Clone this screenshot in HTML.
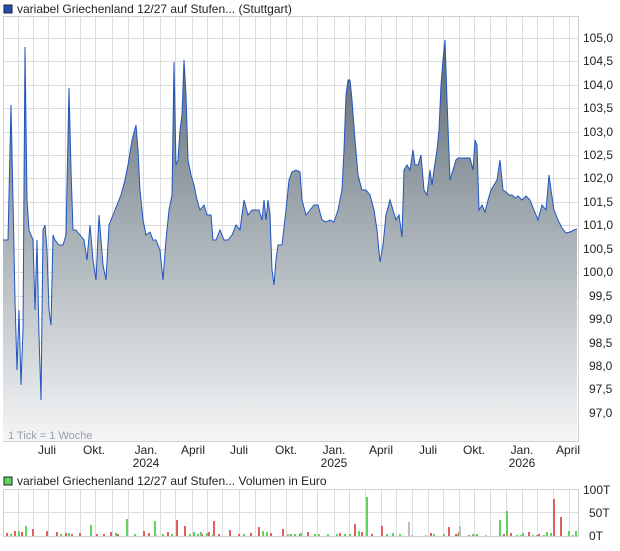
<!DOCTYPE html>
<html><head><meta charset="utf-8"><style>
body{margin:0;background:#fff;width:620px;height:546px;overflow:hidden;font-family:"Liberation Sans",sans-serif;}
svg text{font-family:"Liberation Sans",sans-serif;font-size:12px;fill:#222;}
</style></head><body>
<svg width="620" height="546" viewBox="0 0 620 546">
<defs>
<linearGradient id="g" x1="0" y1="38" x2="0" y2="441" gradientUnits="userSpaceOnUse">
<stop offset="0" stop-color="#5a666f"/><stop offset="0.45" stop-color="#a2abb1"/><stop offset="1" stop-color="#f4f5f6"/>
</linearGradient>
</defs>
<rect x="4" y="5" width="8" height="8" fill="#1f4fb5" stroke="#222" stroke-width="1"/>
<text x="17" y="13">variabel Griechenland 12/27 auf Stufen... (Stuttgart)</text>
<g stroke="#dcdcdc" stroke-width="1">
<path d="M3.5 38.5H578M3.5 61.5H578M3.5 85.5H578M3.5 108.5H578M3.5 132.5H578M3.5 155.5H578M3.5 178.5H578M3.5 202.5H578M3.5 225.5H578M3.5 249.5H578M3.5 272.5H578M3.5 296.5H578M3.5 319.5H578M3.5 343.5H578M3.5 366.5H578M3.5 389.5H578M3.5 413.5H578"/>
<path d="M18.5 17V441M33.5 17V441M48.5 17V441M65.5 17V441M80.5 17V441M95.5 17V441M112.5 17V441M128.5 17V441M143.5 17V441M160.5 17V441M175.5 17V441M192.5 17V441M207.5 17V441M222.5 17V441M239.5 17V441M255.5 17V441M270.5 17V441M286.5 17V441M302.5 17V441M317.5 17V441M334.5 17V441M349.5 17V441M365.5 17V441M381.5 17V441M396.5 17V441M412.5 17V441M428.5 17V441M443.5 17V441M459.5 17V441M474.5 17V441M490.5 17V441M506.5 17V441M522.5 17V441M537.5 17V441M553.5 17V441M569.5 17V441"/>
</g>
<rect x="3.5" y="16.5" width="575" height="425" fill="none" stroke="#d0d0d0"/>
<polygon fill="url(#g)" points="3,441 3,240 8,240 11,105 13,200 15,300 17,370 19,310 21,385 23,330 25,47 27,200 29,230 33,240 35,310 37,240 39,335 41,400 43,230 45,225 47,250 49,310 51,325 53,235 55,240 59,245 63,245 66,235 69,88 71,170 73,230 76,230 80,235 84,240 87,260 90,225 93,260 96,280 99,215 103,265 106,280 109,225 113,215 117,205 121,195 125,180 128,165 132,140 136,125 138,150 140,190 143,220 146,235 150,232 153,240 156,240 160,250 163,280 166,240 169,210 172,195 174,62 176,165 178,160 180,130 182,115 184,60 186,95 188,160 191,175 194,185 197,200 200,210 204,205 207,215 211,215 213,240 216,240 220,230 224,240 228,240 232,235 236,225 240,230 244,200 248,215 252,210 256,210 259,210 262,220 264,200 266,220 268,200 270,215 272,270 274,285 276,260 278,245 282,245 286,210 289,180 292,172 296,170 300,172 302,200 306,215 310,210 314,205 318,205 322,220 326,222 330,220 334,222 338,210 342,190 344,150 346,95 348,80 350,80 352,100 355,140 358,175 362,190 366,190 370,195 374,210 377,230 380,262 383,245 386,215 390,200 393,210 396,220 399,215 402,237 404,170 407,165 410,170 413,150 415,165 418,165 421,155 424,190 427,195 430,170 432,185 434,170 437,150 439,130 441,85 443,60 445,40 447,100 450,180 453,170 456,160 458,158 462,158 466,158 470,158 473,170 475,140 477,145 479,210 482,205 485,212 488,200 491,190 494,185 497,180 500,160 503,190 506,192 509,195 512,195 515,198 518,196 522,200 526,196 530,200 534,210 538,220 542,205 546,210 549,175 551,190 554,210 558,220 562,228 566,233 570,232 574,230 577,229 577,441"/>
<polyline fill="none" stroke="#1f55c0" stroke-width="1" points="3,240 8,240 11,105 13,200 15,300 17,370 19,310 21,385 23,330 25,47 27,200 29,230 33,240 35,310 37,240 39,335 41,400 43,230 45,225 47,250 49,310 51,325 53,235 55,240 59,245 63,245 66,235 69,88 71,170 73,230 76,230 80,235 84,240 87,260 90,225 93,260 96,280 99,215 103,265 106,280 109,225 113,215 117,205 121,195 125,180 128,165 132,140 136,125 138,150 140,190 143,220 146,235 150,232 153,240 156,240 160,250 163,280 166,240 169,210 172,195 174,62 176,165 178,160 180,130 182,115 184,60 186,95 188,160 191,175 194,185 197,200 200,210 204,205 207,215 211,215 213,240 216,240 220,230 224,240 228,240 232,235 236,225 240,230 244,200 248,215 252,210 256,210 259,210 262,220 264,200 266,220 268,200 270,215 272,270 274,285 276,260 278,245 282,245 286,210 289,180 292,172 296,170 300,172 302,200 306,215 310,210 314,205 318,205 322,220 326,222 330,220 334,222 338,210 342,190 344,150 346,95 348,80 350,80 352,100 355,140 358,175 362,190 366,190 370,195 374,210 377,230 380,262 383,245 386,215 390,200 393,210 396,220 399,215 402,237 404,170 407,165 410,170 413,150 415,165 418,165 421,155 424,190 427,195 430,170 432,185 434,170 437,150 439,130 441,85 443,60 445,40 447,100 450,180 453,170 456,160 458,158 462,158 466,158 470,158 473,170 475,140 477,145 479,210 482,205 485,212 488,200 491,190 494,185 497,180 500,160 503,190 506,192 509,195 512,195 515,198 518,196 522,200 526,196 530,200 534,210 538,220 542,205 546,210 549,175 551,190 554,210 558,220 562,228 566,233 570,232 574,230 577,229"/>
<text x="8" y="439" style="fill:#9aa0a6;font-size:11px">1 Tick = 1 Woche</text>
<g>
<text x="583" y="42">105,0</text><text x="583" y="65">104,5</text><text x="583" y="89">104,0</text><text x="583" y="112">103,5</text><text x="583" y="136">103,0</text><text x="583" y="159">102,5</text><text x="583" y="182">102,0</text><text x="583" y="206">101,5</text><text x="583" y="229">101,0</text><text x="583" y="253">100,5</text><text x="583" y="276">100,0</text><text x="589" y="300">99,5</text><text x="589" y="323">99,0</text><text x="589" y="347">98,5</text><text x="589" y="370">98,0</text><text x="589" y="393">97,5</text><text x="589" y="417">97,0</text>
</g>
<g text-anchor="middle">
<text x="47" y="454">Juli</text><text x="94" y="454">Okt.</text><text x="146" y="454">Jan.</text><text x="146" y="467">2024</text><text x="193" y="454">April</text><text x="239" y="454">Juli</text><text x="286" y="454">Okt.</text><text x="334" y="454">Jan.</text><text x="334" y="467">2025</text><text x="381" y="454">April</text><text x="428" y="454">Juli</text><text x="474" y="454">Okt.</text><text x="522" y="454">Jan.</text><text x="522" y="467">2026</text><text x="568" y="454">April</text>
</g>
<rect x="4" y="477" width="8" height="8" fill="#5fd35f" stroke="#222" stroke-width="1"/>
<text x="17" y="485">variabel Griechenland 12/27 auf Stufen... Volumen in Euro</text>
<g stroke="#dcdcdc" stroke-width="1">
<path d="M3.5 512.5H578"/>
<path d="M18.5 489V536M33.5 489V536M48.5 489V536M65.5 489V536M80.5 489V536M95.5 489V536M112.5 489V536M128.5 489V536M143.5 489V536M160.5 489V536M175.5 489V536M192.5 489V536M207.5 489V536M222.5 489V536M239.5 489V536M255.5 489V536M270.5 489V536M286.5 489V536M302.5 489V536M317.5 489V536M334.5 489V536M349.5 489V536M365.5 489V536M381.5 489V536M396.5 489V536M412.5 489V536M428.5 489V536M443.5 489V536M459.5 489V536M474.5 489V536M490.5 489V536M506.5 489V536M522.5 489V536M537.5 489V536M553.5 489V536M569.5 489V536"/>
</g>
<rect x="3.5" y="489.5" width="575" height="47" fill="none" stroke="#d0d0d0"/>
<g fill="#e06060">
<rect x="6" y="533" width="2" height="3"/><rect x="14" y="531" width="2" height="5"/><rect x="21" y="532" width="2" height="4"/><rect x="32" y="529" width="2" height="7"/><rect x="46" y="531" width="2" height="5"/><rect x="56" y="532" width="2" height="4"/><rect x="65" y="533" width="2" height="3"/><rect x="71" y="534" width="2" height="2"/><rect x="79" y="533" width="2" height="3"/><rect x="96" y="534" width="2" height="2"/><rect x="103" y="534" width="2" height="2"/><rect x="110" y="532" width="2" height="4"/><rect x="117" y="534" width="2" height="2"/><rect x="143" y="531" width="2" height="5"/><rect x="148" y="533" width="2" height="3"/><rect x="167" y="532" width="2" height="4"/><rect x="176" y="520" width="2" height="16"/><rect x="184" y="526" width="2" height="10"/><rect x="201" y="534" width="2" height="2"/><rect x="208" y="532" width="2" height="4"/><rect x="213" y="521" width="2" height="15"/><rect x="218" y="534" width="2" height="2"/><rect x="229" y="530" width="2" height="6"/><rect x="238" y="534" width="2" height="2"/><rect x="250" y="533" width="2" height="3"/><rect x="258" y="527" width="2" height="9"/><rect x="270" y="533" width="2" height="3"/><rect x="282" y="529" width="2" height="7"/><rect x="299" y="534" width="2" height="2"/><rect x="307" y="532" width="2" height="4"/><rect x="339" y="533" width="2" height="3"/><rect x="354" y="524" width="2" height="12"/><rect x="361" y="532" width="2" height="4"/><rect x="371" y="534" width="2" height="2"/><rect x="381" y="526" width="2" height="10"/><rect x="430" y="533" width="2" height="3"/><rect x="448" y="527" width="2" height="9"/><rect x="455" y="534" width="2" height="2"/><rect x="458" y="532" width="2" height="4"/><rect x="468" y="535" width="2" height="1"/><rect x="503" y="534" width="2" height="2"/><rect x="510" y="533" width="2" height="3"/><rect x="528" y="532" width="2" height="4"/><rect x="538" y="534" width="2" height="2"/><rect x="553" y="499" width="2" height="37"/><rect x="560" y="517" width="2" height="19"/>
</g>
<g fill="#5fd35f">
<rect x="10" y="534" width="2" height="2"/><rect x="18" y="531" width="2" height="5"/><rect x="25" y="526" width="2" height="10"/><rect x="60" y="534" width="2" height="2"/><rect x="68" y="533" width="2" height="3"/><rect x="90" y="525" width="2" height="11"/><rect x="115" y="533" width="2" height="3"/><rect x="126" y="519" width="2" height="17"/><rect x="134" y="534" width="2" height="2"/><rect x="154" y="521" width="2" height="15"/><rect x="162" y="534" width="2" height="2"/><rect x="171" y="534" width="2" height="2"/><rect x="189" y="534" width="2" height="2"/><rect x="193" y="532" width="2" height="4"/><rect x="197" y="534" width="2" height="2"/><rect x="200" y="532" width="2" height="4"/><rect x="206" y="533" width="2" height="3"/><rect x="212" y="534" width="2" height="2"/><rect x="243" y="534" width="2" height="2"/><rect x="262" y="531" width="2" height="5"/><rect x="266" y="532" width="2" height="4"/><rect x="287" y="534" width="2" height="2"/><rect x="290" y="534" width="2" height="2"/><rect x="294" y="534" width="2" height="2"/><rect x="300" y="533" width="2" height="3"/><rect x="314" y="534" width="2" height="2"/><rect x="318" y="534" width="2" height="2"/><rect x="327" y="534" width="2" height="2"/><rect x="336" y="534" width="2" height="2"/><rect x="344" y="534" width="2" height="2"/><rect x="349" y="534" width="2" height="2"/><rect x="358" y="531" width="2" height="5"/><rect x="366" y="497" width="2" height="39"/><rect x="386" y="534" width="2" height="2"/><rect x="392" y="533" width="2" height="3"/><rect x="399" y="534" width="2" height="2"/><rect x="433" y="534" width="2" height="2"/><rect x="443" y="534" width="2" height="2"/><rect x="457" y="534" width="2" height="2"/><rect x="472" y="534" width="2" height="2"/><rect x="476" y="534" width="2" height="2"/><rect x="499" y="520" width="2" height="16"/><rect x="506" y="511" width="2" height="25"/><rect x="516" y="535" width="2" height="1"/><rect x="520" y="535" width="2" height="1"/><rect x="522" y="533" width="2" height="3"/><rect x="532" y="535" width="2" height="1"/><rect x="536" y="535" width="2" height="1"/><rect x="543" y="535" width="2" height="1"/><rect x="546" y="532" width="2" height="4"/><rect x="550" y="533" width="2" height="3"/><rect x="568" y="531" width="2" height="5"/><rect x="572" y="535" width="2" height="1"/><rect x="575" y="531" width="2" height="5"/>
</g>
<g fill="#bdbdbd">
<rect x="155" y="534" width="2" height="2"/><rect x="408" y="522" width="2" height="14"/><rect x="411" y="535" width="2" height="1"/><rect x="425" y="535" width="2" height="1"/><rect x="459" y="526" width="2" height="10"/><rect x="474" y="535" width="2" height="1"/><rect x="485" y="535" width="2" height="1"/><rect x="288" y="535" width="2" height="1"/>
</g>
<text x="583" y="494">100T</text><text x="589" y="517">50T</text><text x="589" y="540">0T</text>
</svg>
</body></html>
